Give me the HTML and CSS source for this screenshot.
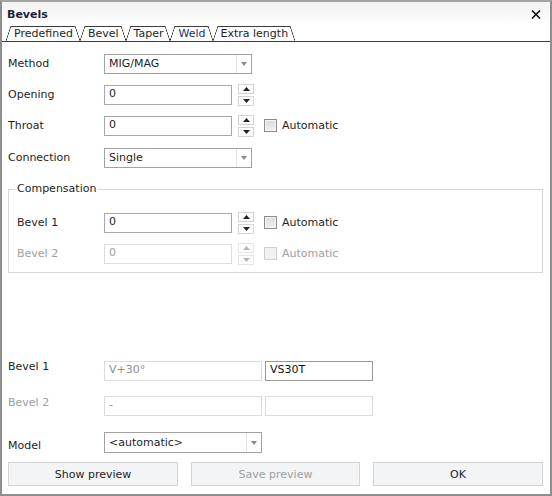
FILE: index.html
```html
<!DOCTYPE html>
<html>
<head>
<meta charset="utf-8">
<link rel="stylesheet" href="styles.css">
</head>
<body>
<div class="window">
  <div class="titlebar">
    <span class="title">Bevels</span>
    <svg class="close" width="10" height="9" viewBox="0 0 10 9"><path d="M1 0.5 L9 8.5 M9 0.5 L1 8.5" stroke="#111" stroke-width="1.6"/></svg>
  </div>
  <div class="tabs">
    <span class="tab">Predefined</span>
    <span class="tab">Bevel</span>
    <span class="tab">Taper</span>
    <span class="tab active">Weld</span>
    <span class="tab">Extra length</span>
  </div>
  <div class="content">
    <div class="row r-method">
      <span class="lbl">Method</span>
      <div class="combo w148"><span class="val">MIG/MAG</span><span class="arrow"><svg width="6" height="4" viewBox="0 0 6 4"><path d="M0 0 H6 L3 4 Z" fill="#8a8a8a"/></svg></span></div>
    </div>
    <div class="row r-gap10">
      <span class="lbl">Opening</span>
      <div class="input"><span>0</span></div>
      <div class="spin"><span class="sb"><svg width="7" height="4" viewBox="0 0 7 4"><path d="M0 4 H7 L3.5 0 Z" fill="#222"/></svg></span><span class="sb"><svg width="7" height="4" viewBox="0 0 7 4"><path d="M0 0 H7 L3.5 4 Z" fill="#222"/></svg></span></div>
    </div>
    <div class="row r-gap10">
      <span class="lbl">Throat</span>
      <div class="input"><span>0</span></div>
      <div class="spin"><span class="sb"><svg width="7" height="4" viewBox="0 0 7 4"><path d="M0 4 H7 L3.5 0 Z" fill="#222"/></svg></span><span class="sb"><svg width="7" height="4" viewBox="0 0 7 4"><path d="M0 0 H7 L3.5 4 Z" fill="#222"/></svg></span></div>
      <span class="check"></span><span class="chk-lbl">Automatic</span>
    </div>
    <div class="row r-gap11">
      <span class="lbl">Connection</span>
      <div class="combo w148"><span class="val">Single</span><span class="arrow"><svg width="6" height="4" viewBox="0 0 6 4"><path d="M0 0 H6 L3 4 Z" fill="#8a8a8a"/></svg></span></div>
    </div>
    <fieldset class="group">
      <legend>Compensation</legend>
      <div class="row">
        <span class="lbl lbl-in">Bevel 1</span>
        <div class="input"><span>0</span></div>
        <div class="spin"><span class="sb"><svg width="7" height="4" viewBox="0 0 7 4"><path d="M0 4 H7 L3.5 0 Z" fill="#222"/></svg></span><span class="sb"><svg width="7" height="4" viewBox="0 0 7 4"><path d="M0 0 H7 L3.5 4 Z" fill="#222"/></svg></span></div>
        <span class="check"></span><span class="chk-lbl">Automatic</span>
      </div>
      <div class="row r-gap10 disabled">
        <span class="lbl lbl-in">Bevel 2</span>
        <div class="input"><span>0</span></div>
        <div class="spin"><span class="sb"><svg width="7" height="4" viewBox="0 0 7 4"><path d="M0 4 H7 L3.5 0 Z" fill="#b5b5b5"/></svg></span><span class="sb"><svg width="7" height="4" viewBox="0 0 7 4"><path d="M0 0 H7 L3.5 4 Z" fill="#b5b5b5"/></svg></span></div>
        <span class="check"></span><span class="chk-lbl">Automatic</span>
      </div>
    </fieldset>
    <div class="row r-bevel1">
      <span class="lbl lbl-b1">Bevel 1</span>
      <div class="box w158 dim"><span>V+30°</span></div>
      <div class="box w108 dark"><span>VS30T</span></div>
    </div>
    <div class="row r-bevel2 disabled">
      <span class="lbl lbl-b2">Bevel 2</span>
      <div class="box w158 dim"><span>-</span></div>
      <div class="box w108 dim"><span></span></div>
    </div>
    <div class="row r-model">
      <span class="lbl">Model</span>
      <div class="combo w158"><span class="val">&lt;automatic&gt;</span><span class="arrow"><svg width="6" height="4" viewBox="0 0 6 4"><path d="M0 0 H6 L3 4 Z" fill="#8a8a8a"/></svg></span></div>
    </div>
    <div class="buttons">
      <button class="btn">Show preview</button>
      <button class="btn off">Save preview</button>
      <button class="btn">OK</button>
    </div>
  </div>
</div>
</body>
</html>
```

FILE: styles.css
```css
* { box-sizing: border-box; }
html, body { margin: 0; padding: 0; background: #fff; }
body {
  font-family: "DejaVu Sans", sans-serif;
  font-size: 11px;
  color: #1e1e1e;
}
.window {
  width: 552px;
  height: 496px;
  border: 2px solid #8e8e8e;
  border-top-color: #a4a4a4;
  background: #fff;
  display: flex;
  flex-direction: column;
}
.titlebar {
  height: 24px;
  flex: none;
  display: flex;
  align-items: center;
  justify-content: space-between;
  padding: 0 9px 0 5px;
  background: linear-gradient(#f2f2f2, #ffffff);
}
.title { font-weight: bold; color: #1f1f3a; }
.close { display: block; }

.tabs {
  flex: none;
  display: flex;
  gap: 10px;
  height: 16px;
  padding-left: 9px;
  border-bottom: 1px solid #3c3c3c;
}
.tab {
  position: relative;
  height: 15px;
  border-top: 1px solid #3c3c3c;
  padding: 0 2px 0 3px;
  line-height: 13px;
  color: #1e1e1e;
}
.tab::before, .tab::after {
  content: "";
  position: absolute;
  top: -1px;
  bottom: 0;
  width: 5px;
}
.tab::before {
  left: -5px;
  background: linear-gradient(to top left, transparent calc(50% - 0.7px), #3c3c3c 50%, transparent calc(50% + 0.7px));
}
.tab::after {
  right: -5px;
  background: linear-gradient(to top right, transparent calc(50% - 0.7px), #3c3c3c 50%, transparent calc(50% + 0.7px));
}
.tab.active { color: #23306a; }

.content {
  flex: 1;
  display: flex;
  flex-direction: column;
  padding: 11px 7px 0 6px;
}
.row {
  display: flex;
  align-items: center;
  height: 21px;
  flex: none;
}
.r-gap10 { margin-top: 10px; }
.r-gap11 { margin-top: 11px; }
.lbl { width: 96px; flex: none; }
.lbl-in { width: 87px; }

.combo {
  height: 20px;
  border: 1px solid #a2a2a2;
  display: flex;
  align-items: center;
  background: #fff;
}
.w148 { width: 148px; }
.w158 { width: 158px; height: 21px; }
.w108 { width: 108px; }
.combo .val { flex: 1; padding-left: 4px; }
.combo .arrow {
  width: 15px;
  align-self: stretch;
  border-left: 1px solid #e4e4e4;
  display: flex;
  align-items: center;
  justify-content: center;
}
.combo .arrow svg { display: block; }

.input {
  width: 128px;
  height: 20px;
  border: 1px solid #a8a8a8;
  padding: 1px 0 0 4px;
  line-height: 14px;
}
.spin {
  margin-left: 6px;
  width: 16px;
  height: 22px;
  display: flex;
  flex-direction: column;
  justify-content: space-between;
}
.sb {
  height: 10px;
  border: 1px solid #d4d4d4;
  display: flex;
  align-items: center;
  justify-content: center;
}
.sb svg { display: block; }
.check {
  margin-left: 10px;
  width: 13px;
  height: 13px;
  border: 1px solid #8c8c8c;
  background: linear-gradient(#dcdcdc, #f0f0f0);
  box-shadow: inset 0 0 0 1px #f4f4f4;
}
.chk-lbl { margin-left: 5px; }

.disabled { color: #9d9d9d; }
.disabled .input { border-color: #dedede; }
.disabled .sb { border-color: #e6e6e6; }
.disabled .check { border-color: #cfcfcf; background: #f2f2f2; box-shadow: none; }

.group {
  margin: 14px 0 0 0;
  padding: 16px 8px 8px 8px;
  border: 1px solid #d6d6d6;
  min-width: 0;
}
.group legend {
  padding: 0 2px;
  margin-left: -2px;
  line-height: 14px;
}

.box {
  height: 20px;
  border: 1px solid #dcdcdc;
  padding: 1px 0 0 4px;
  line-height: 14px;
}
.box.w158 { height: 20px; }
.box + .box { margin-left: 3px; }
.dim { color: #8f8f8f; }
.dark { border-color: #9a9a9a; color: #111; }

.r-bevel1 { margin-top: 87px; }
.r-bevel2 { margin-top: 14px; }
.r-model { margin-top: 16px; }
.r-model .lbl { padding-top: 5px; }
.lbl-b1, .lbl-b2 { align-self: flex-start; line-height: 13px; }
.lbl-b2 { padding-top: 1px; }

.buttons {
  margin-top: 9px;
  display: grid;
  grid-template-columns: 170px 169px 170px;
  column-gap: 13px;
}
.btn {
  height: 24px;
  font: inherit;
  color: #1e1e1e;
  background: #f3f4f6;
  border: 1px solid #d3d3d3;
  padding: 0;
}
.btn.off { color: #a0a0a0; }
```
